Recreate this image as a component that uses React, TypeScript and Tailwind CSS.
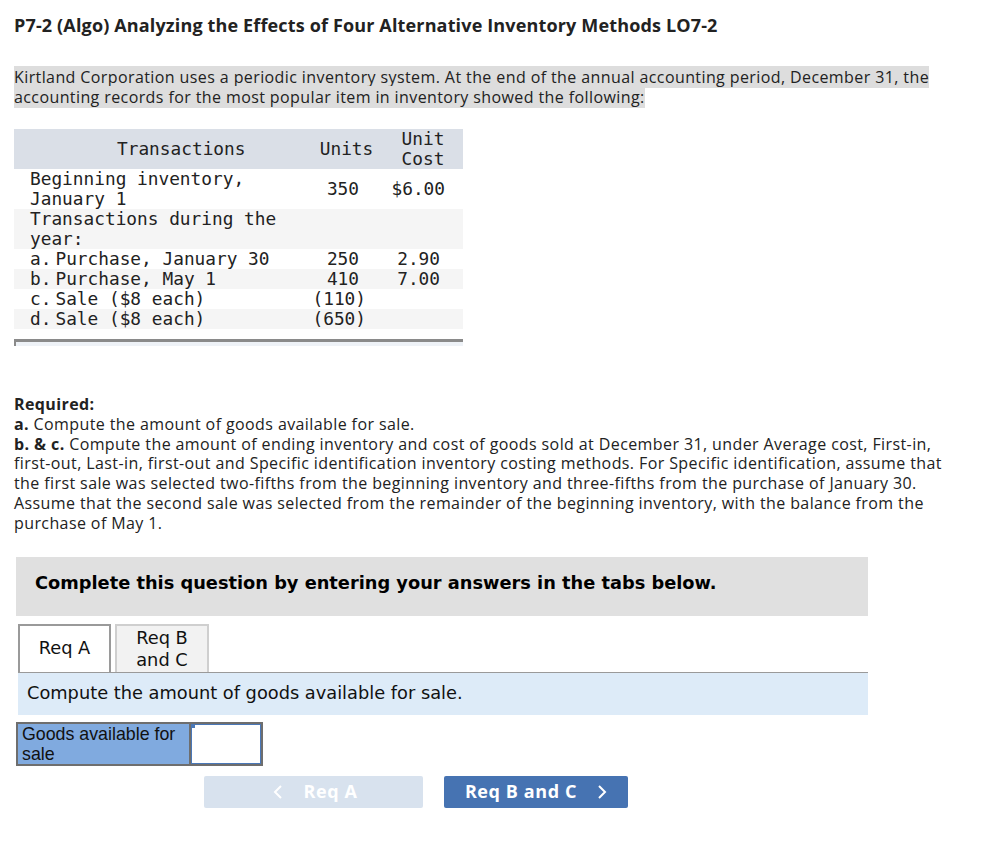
import React from "react";

const mono = "font-['DejaVu_Sans_Mono',monospace]";
const sans = "font-['Open_Sans','Lato',sans-serif]";
const verd = "font-['DejaVu_Sans','Verdana',sans-serif]";

type Row = { label: React.ReactNode; units?: string; cost?: string; bg: string; tall?: boolean };

const Item = ({ p, t }: { p: string; t: string }) => (
  <>
    {p}
    <span className="ml-[4px]">{t}</span>
  </>
);

const rows: Row[] = [
  { label: <>Beginning inventory,<br />January 1</>, units: "350", cost: "$6.00", bg: "bg-white", tall: true },
  { label: <>Transactions during the<br />year:</>, bg: "bg-[#f5f5f5]", tall: true },
  { label: <Item p="a." t="Purchase, January 30" />, units: "250", cost: "2.90", bg: "bg-white" },
  { label: <Item p="b." t="Purchase, May 1" />, units: "410", cost: "7.00", bg: "bg-[#f5f5f5]" },
  { label: <Item p="c." t="Sale ($8 each)" />, units: "(110)", bg: "bg-white" },
  { label: <Item p="d." t="Sale ($8 each)" />, units: "(650)", bg: "bg-[#f5f5f5]" },
];

export default function App() {
  return (
    <div className={`w-[990px] h-[868px] bg-white text-[#222] ${sans}`}>
      <div className="pl-[14px] pt-[14px]">
        <h1 className="text-[18px] tracking-[0.15px] font-bold leading-[22px] text-[#222]">
          P7-2 (Algo) Analyzing the Effects of Four Alternative Inventory Methods LO7-2
        </h1>
        <p className="mt-[31px] w-[940px] text-[16px] tracking-[0.4px] leading-[20px]">
          <span className="bg-[#dddddd]">
            Kirtland Corporation uses a periodic inventory system. At the end of the annual accounting period, December 31, the accounting records for the most popular item in inventory showed the following:
          </span>
        </p>

        <div className={`mt-[22px] w-[449px] ${mono} text-[17.8px] leading-[20px] text-[#222]`}>
          <div className="flex h-[40px] bg-[#dadfe7] items-center">
            <div className="w-[296px] pl-[103px]">Transactions</div>
            <div className="w-[73px] text-center">Units</div>
            <div className="w-[80px] text-center">Unit<br />Cost</div>
          </div>
          {rows.map((r, i) => (
            <div key={i} className={`flex items-center ${r.bg} ${r.tall ? "h-[40px]" : "h-[20px]"}`}>
              <div className="w-[296px] pl-[16px] whitespace-nowrap">{r.label}</div>
              <div className={`w-[73px] text-right ${r.units && r.units.startsWith("(") ? "pr-[17px]" : "pr-[24px]"}`}>{r.units}</div>
              <div className={`w-[80px] text-right ${r.cost && r.cost.startsWith("$") ? "pr-[18px]" : "pr-[23px]"}`}>{r.cost}</div>
            </div>
          ))}
          <div className="mt-[10px] h-[7px] border-t-[3px] border-l-2 border-[#8a8a8a] bg-[#eef2f7]" />
        </div>

        <div className="mt-[49px] w-[940px] text-[16px] tracking-[0.4px] leading-[19.8px]">
          <div className="font-bold">Required:</div>
          <div><span className="font-bold">a.</span> Compute the amount of goods available for sale.</div>
          <div>
            <span className="font-bold">b. &amp; c.</span> Compute the amount of ending inventory and cost of goods sold at December 31, under Average cost, First-in, first-out, Last-in, first-out and Specific identification inventory costing methods. For Specific identification, assume that the first sale was selected two-fifths from the beginning inventory and three-fifths from the purchase of January 30. Assume that the second sale was selected from the remainder of the beginning inventory, with the balance from the purchase of May 1.
          </div>
        </div>
      </div>

      <div className="ml-[16px] mt-[23px] w-[852px] h-[59px] bg-[#e0e0e0] flex items-center pl-[19px] pb-[6px]">
        <span className={`${verd} font-bold text-[17.8px] text-black`}>
          Complete this question by entering your answers in the tabs below.
        </span>
      </div>

      <div className={`ml-[18px] mt-[8px] w-[850px] ${verd}`}>
        <div className="flex items-end gap-[4px] h-[48px]">
          <div className="w-[93px] h-[48px] border-2 border-b-0 border-[#9a9a9a] bg-white flex items-center justify-center text-[17.8px] text-[#111]">
            Req A
          </div>
          <div className="w-[94px] h-[48px] border-2 border-b-0 border-[#cfcfcf] bg-[#f2f2f2] flex items-center justify-center text-center text-[17.8px] leading-[22px] text-[#111]">
            Req B<br />and C
          </div>
        </div>
        <div className="h-[43px] border-t border-[#9a9a9a] bg-[#ddebf8] flex items-center pl-[9px] text-[17.8px] text-[#111]">
          Compute the amount of goods available for sale.
        </div>
      </div>

      <div className="ml-[16px] mt-[7px] flex w-[247px] h-[44px] border-2 border-[#6e6e6e] bg-[#6e6e6e] gap-[2px] font-['Liberation_Sans',Arial,sans-serif]">
        <div className="w-[171px] bg-[#80aadf] text-[17.8px] leading-[20px] text-[#111] pl-[4px] pt-0">
          Goods available for sale
        </div>
        <div className="flex-1 bg-white border border-[#4a78b8] relative">
          <div className="absolute left-0 top-0 w-[3px] h-[3px] bg-[#4a78b8]" />
        </div>
      </div>

      <div className="ml-[204px] mt-[10px] flex gap-[21px]">
        <div className="w-[219px] h-[32px] rounded-[2px] bg-[#d8e2ee] text-white font-bold text-[18px] tracking-[0.6px] flex items-center justify-center gap-[20px] pl-[14px]">
          <svg width="10" height="16" viewBox="0 0 10 16" fill="none"><path d="M8 2L2 8l6 6" stroke="white" strokeWidth="2" /></svg>
          <span className="mr-[10px]">Req A</span>
        </div>
        <div className="w-[184px] h-[32px] rounded-[2px] bg-[#4673b2] text-white font-bold text-[18px] tracking-[0.6px] flex items-center justify-center gap-[20px]">
          <span>Req B and C</span>
          <svg width="10" height="16" viewBox="0 0 10 16" fill="none"><path d="M2 2l6 6-6 6" stroke="white" strokeWidth="2" /></svg>
        </div>
      </div>
    </div>
  );
}
